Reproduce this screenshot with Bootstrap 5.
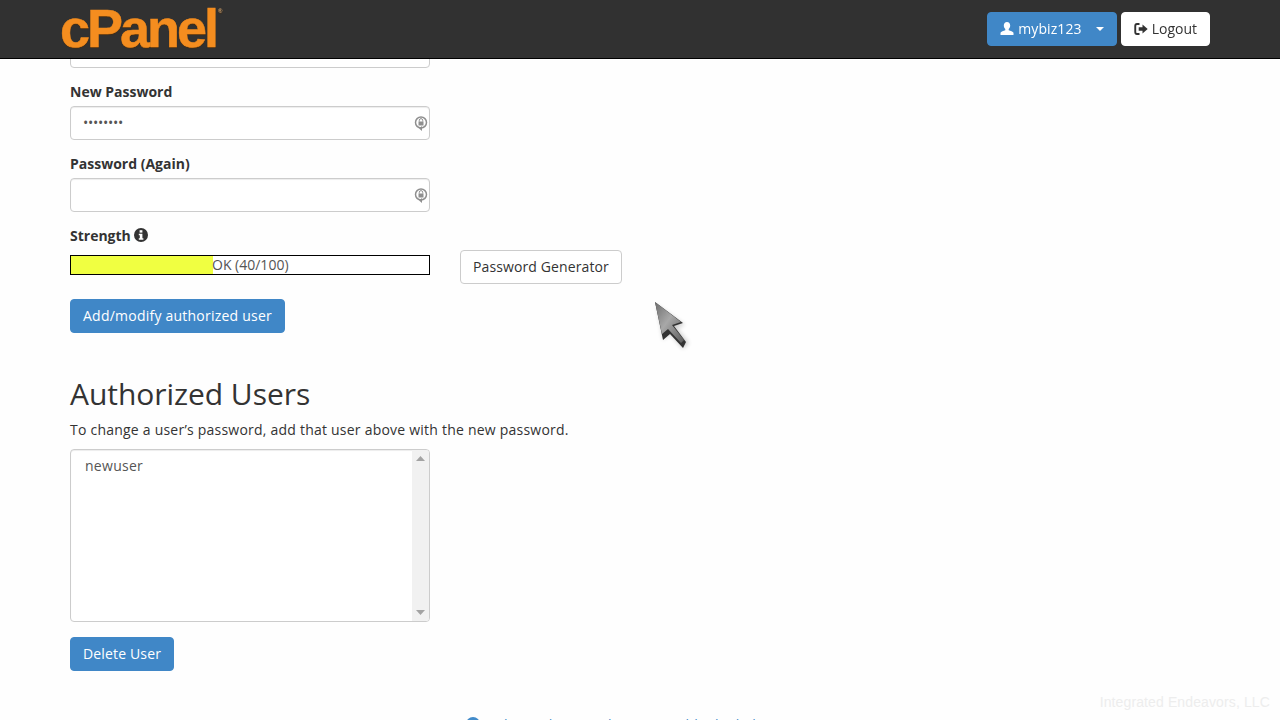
<!DOCTYPE html>
<html lang="en">
<head>
<meta charset="utf-8">
<title>cPanel</title>
<link rel="stylesheet" href="https://cdn.jsdelivr.net/npm/bootstrap@5.3.0/dist/css/bootstrap.min.css">
<style>
html,body{height:720px;overflow:hidden}
body{font-family:"Open Sans",sans-serif;font-size:14px;line-height:20px;color:#333;background:#fefefe}
.cp-top{height:59px;background:#313131;border-bottom:1px solid #000;padding:0 70px 0 60px}
.cp-logo{font-family:"Liberation Sans",sans-serif;font-weight:700;font-size:54px;line-height:54px;letter-spacing:-3px;color:#f48d1f;-webkit-text-stroke:.5px #f48d1f;text-shadow:0 1px 1px #4a2c0c;text-decoration:none;margin-top:-2px}
.cp-logo sup{font-size:6px;top:-34px;letter-spacing:0;margin-left:2px;vertical-align:baseline;position:relative;-webkit-text-stroke:0;color:#c9a070}
.cp-main{padding:34px 0 0 70px;position:relative;height:720px}
.cp-btn{font-size:14px;line-height:20px;padding:6px 12px;border-radius:4px}
.cp-blue{background:#4087c7;border:1px solid #4087c7;color:#fff;letter-spacing:.23px}
.cp-blue:hover{background:#4087c7;color:#fff}
.cp-white{background:#fff;border:1px solid #ccc;color:#333;letter-spacing:.11px}
.cp-top .cp-white{border-color:#fff;letter-spacing:0}
.cp-top .cp-blue{letter-spacing:.1px}
.cp-field{width:360px;height:34px;border:1px solid #ccc;border-radius:4px;background:#fff;box-shadow:inset 0 1px 1px rgba(0,0,0,.075);padding:6px 12px;font-size:14px;color:#555;position:relative}
.cp-lab{display:block;font-weight:700;line-height:20px;margin:0 0 4px}
.cp-grp{margin-bottom:14px}
.cp-pw{letter-spacing:-.25px}
.cp-mgr{position:absolute;right:1px;top:8px}
.cp-meter{width:360px;height:20px;border:1px solid #000;background:#fff;line-height:18px;color:#555;display:flex;margin-top:9px}
.cp-fill{width:142px;background:#f0ff41;flex:none}
.cp-metertxt{margin-left:-1px}
.cp-gen{margin:24px 0 0 30px}
.cp-add{margin-top:15px}
.cp-h{font-size:30px;line-height:33px;font-weight:400;margin:44px 0 10px;letter-spacing:-.05px}
.cp-note{margin-bottom:9px;letter-spacing:.225px}
.cp-list{width:360px;height:173px;border:1px solid #ccc;border-radius:4px;background:#fff;display:flex;box-shadow:inset 0 1px 1px rgba(0,0,0,.075);overflow:hidden;color:#555}
.cp-opt{flex:1;padding:6px 14px;letter-spacing:.28px}
.cp-sb{width:17px;background:#f1f1f1;display:flex;flex-direction:column;justify-content:space-between;align-items:center;padding:6px 0}
.cp-del{margin-top:15px;letter-spacing:.15px}
.cp-return{position:absolute;left:466px;top:716px;white-space:nowrap;color:#428bca;letter-spacing:.22px}
.cp-return svg{margin-top:1px}
.cp-return span{margin-top:-1px}
.cp-wm{position:absolute;right:10px;bottom:10px;font-family:"Liberation Sans",sans-serif;font-size:14px;line-height:16px;letter-spacing:.12px;color:#ededed}
.cp-cursor{position:absolute;left:650px;top:298px}
.cp-caret{display:inline-block;width:0;height:0;margin-left:14px;border-top:4px solid #fff;border-left:4px solid transparent;border-right:4px solid transparent}
</style>
</head>
<body>
<header class="cp-top fixed-top d-flex align-items-center justify-content-between">
  <a class="cp-logo" href="#">cPanel<sup>®</sup></a>
  <div class="d-flex gap-1">
    <button class="btn cp-btn cp-blue d-flex align-items-center" type="button">
      <svg width="14" height="14" viewBox="0 0 14 14" class="me-1" fill="#fff"><path d="M7 0c2 0 3.200 1.500 3.200 3.600 0 1.400-.6 2.700-1.500 3.500v1.100c1.800.6 4.300 1.300 4.800 2.500v2.300H.5v-2.300c.5-1.200 3-1.900 4.800-2.500V7.100C4.400 6.300 3.800 5 3.800 3.600 3.800 1.500 5 0 7 0z"/></svg>
      mybiz123
      <span class="cp-caret"></span>
    </button>
    <button class="btn cp-btn cp-white d-flex align-items-center" type="button">
      <svg width="14" height="14" viewBox="0 0 14 14" class="me-1" fill="#333"><path d="M5.500 1H3C1.300 1 .3 2.300.3 4v6c0 1.700 1 3 2.700 3h2.500v-2H3.200c-.6 0-1-.5-1-1.100V4.100c0-.6.400-1.100 1-1.100h2.300zM8.500 2.500V5.300H4.700v3.400h3.800v2.800L13.700 7z"/></svg>
      Logout
    </button>
  </div>
</header>
<main class="cp-main">
  <div class="cp-grp"><div class="cp-field"></div></div>
  <div class="cp-grp">
    <label class="cp-lab">New Password</label>
    <div class="cp-field cp-pw">••••••••
      <svg class="cp-mgr" width="14" height="17" viewBox="0 0 14 17" fill="none"><circle cx="7" cy="7.500" r="5.500" stroke="#8f8f8f" stroke-width="1.500"/><rect x="4.500" y="6.500" width="5" height="4" fill="#8f8f8f"/><path d="M5.300 6.500V5.300a1.700 1.700 0 0 1 3.400 0V6.500" stroke="#8f8f8f"/><path d="M5 13.500l3 2.500v-5z" fill="#8f8f8f"/></svg>
    </div>
  </div>
  <div class="cp-grp">
    <label class="cp-lab">Password (Again)</label>
    <div class="cp-field">
      <svg class="cp-mgr" width="14" height="17" viewBox="0 0 14 17" fill="none"><circle cx="7" cy="7.500" r="5.500" stroke="#8f8f8f" stroke-width="1.500"/><rect x="4.500" y="6.500" width="5" height="4" fill="#8f8f8f"/><path d="M5.300 6.500V5.300a1.700 1.700 0 0 1 3.400 0V6.500" stroke="#8f8f8f"/><path d="M5 13.500l3 2.500v-5z" fill="#8f8f8f"/></svg>
    </div>
  </div>
  <div class="d-flex align-items-start">
    <div>
      <label class="cp-lab m-0">Strength
        <svg width="14" height="14" viewBox="0 0 14 14" style="vertical-align:-1px"><circle cx="7" cy="7" r="7" fill="#333"/><rect x="5.600" y="2.200" width="2.800" height="2.400" fill="#fff"/><path d="M4.800 5.700h3.600v4.500h1v1.500H4.800v-1.500h1V7.200h-1z" fill="#fff"/></svg>
      </label>
      <div class="cp-meter"><span class="cp-fill"></span><span class="cp-metertxt">OK (40/100)</span></div>
    </div>
    <button class="btn cp-btn cp-white cp-gen" type="button">Password Generator</button>
  </div>
  <button class="btn cp-btn cp-blue d-block cp-add" type="button">Add/modify authorized user</button>
  <h2 class="cp-h">Authorized Users</h2>
  <p class="cp-note">To change a user’s password, add that user above with the new password.</p>
  <div class="cp-list">
    <div class="cp-opt">newuser</div>
    <div class="cp-sb">
      <svg width="9" height="5" viewBox="0 0 9 5"><path d="M4.500 0L9 5H0z" fill="#a3a3a3"/></svg>
      <svg width="9" height="5" viewBox="0 0 9 5"><path d="M0 0h9L4.500 5z" fill="#a3a3a3"/></svg>
    </div>
  </div>
  <button class="btn cp-btn cp-blue d-block cp-del" type="button">Delete User</button>
  <a class="cp-return text-decoration-none d-flex align-items-start gap-2" href="#">
    <svg width="14" height="14" viewBox="0 0 14 14"><circle cx="7" cy="7" r="7" fill="#428bca"/></svg>
    <span>Select a directory here to enable the link</span>
  </a>
</main>
<svg class="cp-cursor" width="44" height="58" viewBox="0 0 44 58">
  <defs>
    <linearGradient id="cpface" x1="0" y1="0" x2="1" y2="1"><stop offset="0" stop-color="#6e6e6e"/><stop offset=".45" stop-color="#a8a8a8"/><stop offset="1" stop-color="#5a5a5a"/></linearGradient>
    <filter id="cpblur" x="-30%" y="-30%" width="160%" height="160%"><feGaussianBlur stdDeviation="2"/></filter>
  </defs>
  <path d="M7 7l28 20-8 3 12 15-6 6-13-15-7 6z" fill="#000" opacity=".18" filter="url(#cpblur)"/>
  <path d="M5 4l28 21-9 3 12 16-3 6-13-14-7 6z" fill="#333"/>
  <path d="M5 4l26 20-9 3 12 15-3 3-13-14-6 5z" fill="url(#cpface)"/>
</svg>
<div class="cp-wm">Integrated Endeavors, LLC</div>
</body>
</html>
